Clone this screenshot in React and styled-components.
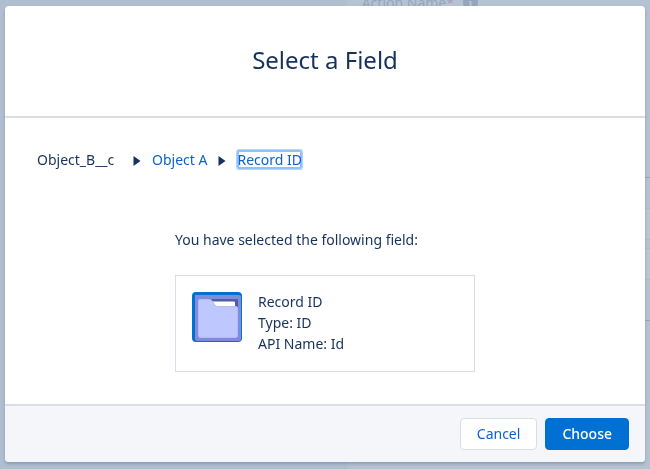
import React from 'react';
import styled, { createGlobalStyle } from 'styled-components';

const GlobalStyle = createGlobalStyle`
  *, *::before, *::after {
    box-sizing: border-box;
  }
  body {
    margin: 0;
    background: #b0bfd0;
    color: #16325c;
    font-family: "Noto Sans", "Open Sans", sans-serif;
    font-size: 14px;
    line-height: 21px;
  }
`;

const Builder = styled.div`
  position: fixed;
  inset: 0;
  display: grid;
  grid-template-columns: 8fr 7fr;
  overflow: hidden;
`;

const Canvas = styled.div`
  background: #b0bfd0;
`;

const Properties = styled.div`
  display: flex;
  flex-direction: column;
  background: #b5c2d1;
`;

const FieldLabel = styled.div`
  display: flex;
  align-items: center;
  gap: 9px;
  height: 21px;
  margin-top: -8px;
  margin-bottom: 164px;
  padding-left: 15px;
  color: #94a6bd;
`;

const Required = styled.span`
  color: #a0a1b9;
`;

const Panel = styled.div`
  height: 144px;
  padding: 30px 0;
  border: 1px solid #89a9c6;
  border-width: 1px 0;
`;

const PanelRow = styled.div`
  height: 32px;
  margin-bottom: 8px;
  background: #b9c6d3;
  border: 1px solid #b0bdcc;
  border-width: 1px 0;
`;

const Overlay = styled.div`
  position: relative;
  display: flex;
  min-height: 100vh;
  padding: 6px 5px 7px;
`;

const Modal = styled.section`
  display: flex;
  flex: 1;
  flex-direction: column;
  background: #fff;
  border-radius: 4px;
  box-shadow: 0 2px 3px rgba(22, 50, 92, 0.25);
`;

const Header = styled.header`
  padding: 37px 16px 39px;
  border-bottom: 2px solid #d8dde6;
  text-align: center;
`;

const Title = styled.h2`
  margin: 0;
  font-size: 24px;
  font-weight: 400;
  line-height: 34px;
`;

const Content = styled.div`
  flex: 1;
  padding: 31px 32px 32px;
`;

const Breadcrumbs = styled.nav`
  display: flex;
  align-items: center;
`;

const RootCrumb = styled.span`
  min-width: 85px;
`;

const Crumb = styled.a`
  color: #0b62ce;
  line-height: 19px;
  text-decoration: none;
  border-radius: 2px;
  box-shadow: ${(props) => (props.$focused ? '0 0 0 1px #b3d6fc, inset 0 0 0 2px #8ec2fa' : 'none')};
`;

const CrumbArrow = styled.svg`
  width: 8px;
  height: 12px;
  margin: 2px 11px 0;
  fill: #16325c;
`;

const Selection = styled.div`
  width: 300px;
  max-width: 100%;
  margin: 59px auto 0;
`;

const Message = styled.p`
  margin: 0 0 25px;
`;

const Card = styled.div`
  display: flex;
  gap: 16px;
  padding: 16px 16px 18px;
  border: 1px solid #d8dde6;
`;

const FolderIcon = styled.svg`
  width: 50px;
  height: 50px;
`;

const Details = styled.div`
  display: flex;
  flex-direction: column;
  gap: 2px;
  line-height: 19px;
`;

const Footer = styled.footer`
  display: flex;
  justify-content: flex-end;
  gap: 8px;
  padding: 12px 16px;
  background: #f4f6fa;
  border-top: 2px solid #d8dde6;
  border-radius: 0 0 4px 4px;
`;

const Button = styled.button`
  height: 32px;
  padding: 0 16px;
  color: ${(props) => (props.$brand ? '#fff' : '#0b62ce')};
  background: ${(props) => (props.$brand ? '#0070d2' : '#fff')};
  border: 1px solid ${(props) => (props.$brand ? '#0070d2' : '#d8dde6')};
  border-radius: 4px;
  font: inherit;
  font-weight: ${(props) => (props.$brand ? 500 : 400)};
  line-height: 30px;
  cursor: pointer;
`;

const Separator = () => (
  <CrumbArrow viewBox="0 0 8 12" aria-hidden="true">
    <path d="M0.5 1 L7.5 6 L0.5 11 Z" />
  </CrumbArrow>
);

const Folder = () => (
  <FolderIcon viewBox="0 0 50 50" aria-hidden="true">
    <rect width="50" height="50" rx="4" fill="#0070d2" />
    <path d="M3 3H47Q49 3 49 5V47Q49 49 47 49H5Q3 49 3 47Z" fill="#7f8cdc" />
    <path d="M19 7H45Q46 7 46 8V15H25Z" fill="#525da5" />
    <path d="M20 9.5H42Q43 9.5 43 10.5V15H24Z" fill="#fff" />
    <path
      d="M6.5 9Q6.5 7.5 8 7.5H17Q19 7.5 20 9L22.5 12.5Q23.5 14.500 25.5 14.500H44Q45.500 14.500 45.500 16V43.500Q45.500 45.500 43.500 45.500H8.500Q6.500 45.500 6.500 43.500Z"
      fill="#bec8ff"
      stroke="#b2bcf7"
    />
  </FolderIcon>
);

const App = () => {
  return (
    <>
      <GlobalStyle />
      <Builder aria-hidden="true">
        <Canvas />
        <Properties>
          <FieldLabel>
            <span>Action Name<Required>*</Required></span>
            <svg width="15" height="15" viewBox="0 0 15 15">
              <rect width="15" height="15" rx="7" fill="#94a6bd" />
              <path d="M6 6H8.500V11H10V12H5.500V11H6.500V7H6ZM6.500 3H8.500V5H6.500Z" fill="#b5c2d1" />
            </svg>
          </FieldLabel>
          <Panel>
            <PanelRow />
            <PanelRow />
          </Panel>
        </Properties>
      </Builder>
      <Overlay>
        <Modal role="dialog" aria-labelledby="modal-title">
          <Header>
            <Title id="modal-title">Select a Field</Title>
          </Header>
          <Content>
            <Breadcrumbs>
              <RootCrumb>Object_B__c</RootCrumb>
              <Separator />
              <Crumb href="#object-a">Object A</Crumb>
              <Separator />
              <Crumb href="#record-id" $focused>Record ID</Crumb>
            </Breadcrumbs>
            <Selection>
              <Message>You have selected the following field:</Message>
              <Card>
                <Folder />
                <Details>
                  <span>Record ID</span>
                  <span>Type: ID</span>
                  <span>API Name: Id</span>
                </Details>
              </Card>
            </Selection>
          </Content>
          <Footer>
            <Button type="button">Cancel</Button>
            <Button type="button" $brand>Choose</Button>
          </Footer>
        </Modal>
      </Overlay>
    </>
  );
};

export default App;
